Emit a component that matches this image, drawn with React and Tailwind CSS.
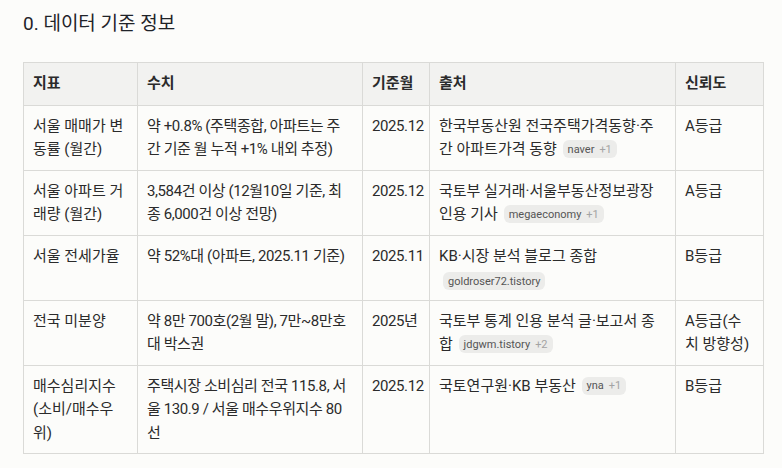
import React from "react";

const rows = [
  {
    a: "서울 매매가 변동률 (월간)",
    b: "약 +0.8% (주택종합, 아파트는 주간 기준 월 누적 +1% 내외 추정)",
    c: "2025.12",
    d: "한국부동산원 전국주택가격동향·주간 아파트가격 동향",
    badge: "naver",
    plus: "+1",
    e: "A등급",
  },
  {
    a: "서울 아파트 거래량 (월간)",
    b: "3,584건 이상 (12월10일 기준, 최종 6,000건 이상 전망)",
    c: "2025.12",
    d: "국토부 실거래·서울부동산정보광장 인용 기사",
    badge: "megaeconomy",
    plus: "+1",
    e: "A등급",
  },
  {
    a: "서울 전세가율",
    b: "약 52%대 (아파트, 2025.11 기준)",
    c: "2025.11",
    d: "KB·시장 분석 블로그 종합",
    badge: "goldroser72.tistory",
    plus: "",
    e: "B등급",
    badgeBlock: true,
  },
  {
    a: "전국 미분양",
    b: "약 8만 700호(2월 말), 7만~8만호대 박스권",
    c: "2025년",
    d: "국토부 통계 인용 분석 글·보고서 종합",
    badge: "jdgwm.tistory",
    plus: "+2",
    e: "A등급(수치 방향성)",
  },
  {
    a: "매수심리지수 (소비/매수우위)",
    b: "주택시장 소비심리 전국 115.8, 서울 130.9 / 서울 매수우위지수 80선",
    c: "2025.12",
    d: "국토연구원·KB 부동산",
    badge: "yna",
    plus: "+1",
    e: "B등급",
  },
];

function Badge({ name, plus, block }) {
  return (
    <span
      className={
        "inline-flex items-center h-[18px] px-[5px] rounded-md bg-[#ececea] text-[11px] leading-none tracking-normal align-middle " +
        (block ? "mt-[2px] ml-[4px]" : "relative -top-[1px] ml-[2px]")
      }
    >
      <span className="text-[#555]">{name}</span>
      {plus ? <span className="text-[#a3a3a3] ml-[5px]">{plus}</span> : null}
    </span>
  );
}

export default function App() {
  const th =
    "border border-[#dadad7] px-[9px] py-[9px] align-top text-left font-semibold";
  const cell =
    "border border-[#dadad7] px-[9px] pt-[9px] pb-[8px] align-top text-left";
  const tight = " tracking-[-0.4px]";
  return (
    <div
      className="min-h-[468px] w-[782px] bg-[#fcfcfa] text-[#2b2b2b] pl-[23px] pt-[10px]"
      style={{ fontFamily: '"Roboto", "Noto Sans CJK KR", sans-serif' }}
    >
      <h2 className="text-[19px] leading-[28px] font-normal text-[#1f2329] mb-[24px]">
        0. 데이터 기준 정보
      </h2>
      <table className="table-fixed border-collapse w-[740px] text-[15px] leading-[23.5px]">
        <colgroup>
          <col className="w-[114px]" />
          <col className="w-[225px]" />
          <col className="w-[67px]" />
          <col className="w-[246px]" />
          <col className="w-[88px]" />
        </colgroup>
        <thead>
          <tr className="bg-[#f2f2f0]">
            <th className={th}>지표</th>
            <th className={th}>수치</th>
            <th className={th}>기준월</th>
            <th className={th}>출처</th>
            <th className={th}>신뢰도</th>
          </tr>
        </thead>
        <tbody>
          {rows.map((r, i) => (
            <tr key={i}>
              <td className={cell}>{r.a}</td>
              <td className={cell + tight}>{r.b}</td>
              <td className={cell + tight + " whitespace-nowrap"}>{r.c}</td>
              <td className={cell}>
                {r.d}
                {r.badgeBlock ? (
                  <div>
                    <Badge name={r.badge} plus={r.plus} block />
                  </div>
                ) : (
                  <>
                    {" "}
                    <Badge name={r.badge} plus={r.plus} />
                  </>
                )}
              </td>
              <td className={cell}>{r.e}</td>
            </tr>
          ))}
        </tbody>
      </table>
    </div>
  );
}
